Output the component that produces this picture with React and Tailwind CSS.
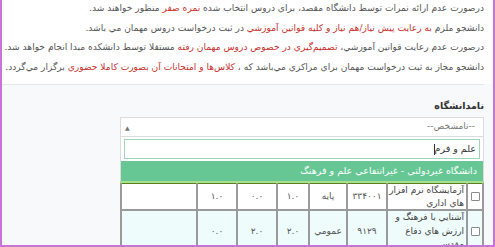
import React from "react";

const R = ({ children }) => <span className="text-[#c9302c]">{children}</span>;

const Check = () => (
  <span className="inline-block w-[9px] h-[9px] border border-[#8a8a8a] bg-white rounded-[1px] align-middle" />
);

export default function App() {
  return (
    <div
      dir="rtl"
      className="w-[495px] h-[247px] overflow-hidden bg-[#f8f9fb] border-l-2 border-r-2 border-b-2 border-[#c774d6] box-border"
      style={{ fontFamily: '"DejaVu Sans", sans-serif' }}
    >
      <div className="bg-white pr-[9px] pl-[8px] text-[9.1px] text-[#555] leading-[19.5px] whitespace-nowrap pb-[7px]">
        <p className="-mt-[1px]">
          درصورت عدم ارائه نمرات توسط دانشگاه مقصد، براي دروس انتخاب شده <R>نمره صفر</R> منظور خواهند شد.
        </p>
        <p>
          دانشجو ملزم <R>به رعايت پيش نياز/هم نياز و كليه قوانين آموزشي</R> در ثبت درخواست دروس مهمان مي باشد.
        </p>
        <p>
          درصورت عدم رعايت قوانين آموزشي، <R>تصميم‌گيري در خصوص دروس مهمان رفته</R> مستقلا توسط دانشكده مبدا انجام خواهد شد.
        </p>
        <p>
          دانشجو مجاز به ثبت درخواست مهمان براي مراكزي مي‌باشد كه ، <R>كلاس‌ها و امتحانات آن بصورت كاملا حضوري</R> برگزار مي‌گردد.
        </p>
      </div>
      <div className="border-t border-[#e6e7ea] mr-[9px]" />

      <div className="pr-[9px] pt-[14px]">
        <div className="text-[9.5px] font-bold text-[#333] leading-[13px]">نامدانشگاه</div>
        <div className="w-[364px] mt-[5px]">
          {/* select */}
          <div className="h-[20px] bg-white border border-[#dcdcdc] flex items-center justify-between pr-[8px] pl-[4px]">
            <span className="text-[9px] text-[#777]">--نامشخص--</span>
            <span className="text-[6px] text-[#777]">▲</span>
          </div>
          {/* dropdown */}
          <div className="bg-white border-x border-[#dcdcdc] px-[3px] pt-[2px]">
            <div className="h-[20px] border border-[#9fd6bb] bg-white flex items-center pr-[3px] text-[9.5px] text-[#333]">
              علم و فرم<span className="inline-block w-px h-[11px] bg-[#333]" />
            </div>
          </div>
          <div className="bg-white border-x border-[#dcdcdc] pt-[2px]">
            <div className="h-[20px] bg-[#66c795] text-white text-[9.5px] flex items-center pr-[6px]">
              دانشگاه غيردولتي - غيرانتفاعي علم و فرهنگ
            </div>
          </div>
          <div className="h-[2px] bg-[#a6e28d]" />
          {/* table */}
          <table className="w-full border-collapse text-[9px] text-[#555] table-fixed">
            <colgroup>
              <col className="w-[16px]" />
              <col className="w-[80px]" />
              <col className="w-[40px]" />
              <col className="w-[38px]" />
              <col className="w-[32px]" />
              <col className="w-[40px]" />
              <col className="w-[40px]" />
              <col />
            </colgroup>
            <tbody>
              <tr className="bg-white border-t border-[#5c7d1c]">
                <td className="border-2 border-[#9a9a9a] border-t-0 text-center align-middle"><Check /></td>
                <td className="border-2 border-[#9a9a9a] border-t-0 text-right pr-[2px] leading-[12.5px] py-[0px] text-[#444]">
                  آزمايشگاه نرم افزار هاي اداري
                </td>
                <td className="border-2 border-[#9a9a9a] border-t-0 text-center">۳۳۴۰۰۱</td>
                <td className="border-2 border-[#9a9a9a] border-t-0 text-center">پايه</td>
                <td className="border-2 border-[#9a9a9a] border-t-0 text-center">۱.۰</td>
                <td className="border-2 border-[#9a9a9a] border-t-0 text-center">۰.۰</td>
                <td className="border-2 border-[#9a9a9a] border-t-0 text-center">۱.۰</td>
                <td className="border-2 border-[#9a9a9a] border-t-0"></td>
              </tr>
              <tr className="bg-[#effcfc]">
                <td className="border-2 border-[#9a9a9a] text-center align-middle"><Check /></td>
                <td className="border-2 border-[#9a9a9a] text-right pr-[2px] leading-[13.5px] py-[0px] text-[#444]">
                  آشنايي با فرهنگ و ارزش هاي دفاع مقدس
                </td>
                <td className="border-2 border-[#9a9a9a] text-center">۹۱۲۹</td>
                <td className="border-2 border-[#9a9a9a] text-center">عمومي</td>
                <td className="border-2 border-[#9a9a9a] text-center">۲.۰</td>
                <td className="border-2 border-[#9a9a9a] text-center">۲.۰</td>
                <td className="border-2 border-[#9a9a9a] text-center">۰.۰</td>
                <td className="border-2 border-[#9a9a9a]"></td>
              </tr>
            </tbody>
          </table>
        </div>
      </div>
    </div>
  );
}
